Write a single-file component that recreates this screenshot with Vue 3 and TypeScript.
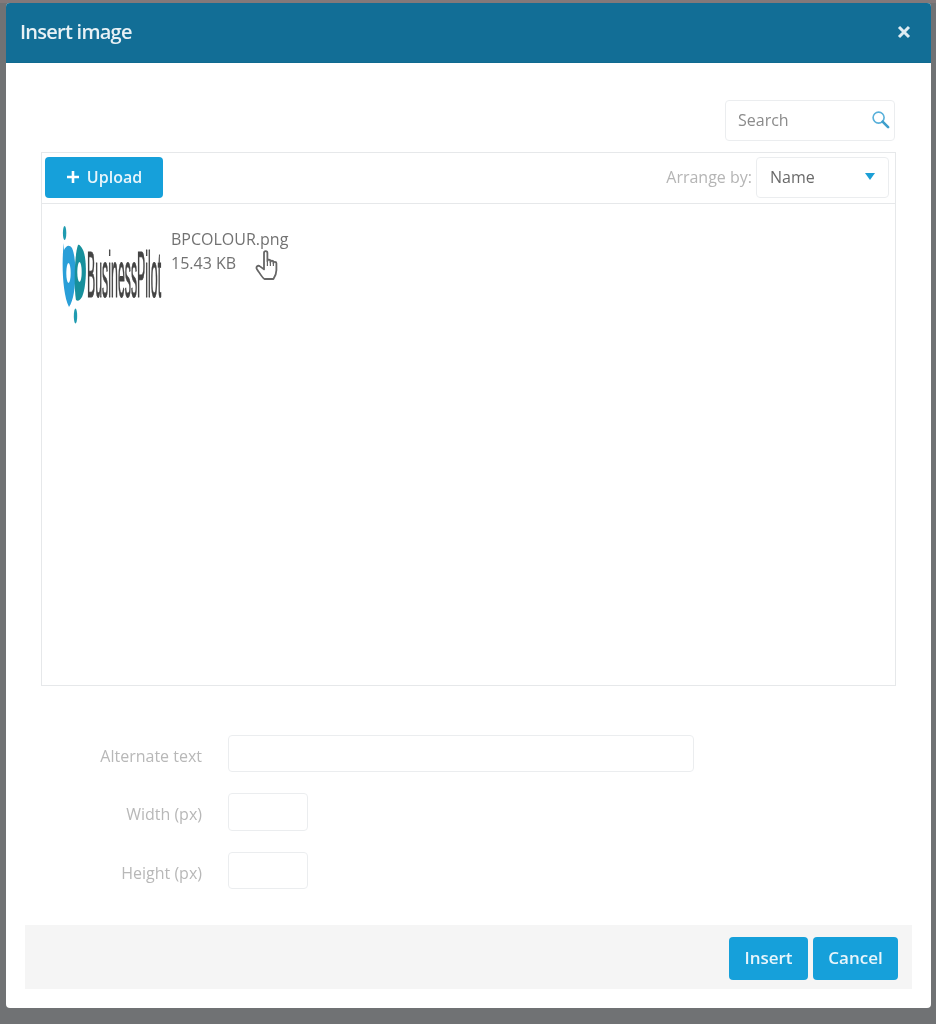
<script setup lang="ts">
const fields = [
  { label: 'Alternate text', cls: 'wide' },
  { label: 'Width (px)', cls: 'narrow tall' },
  { label: 'Height (px)', cls: 'narrow' },
]
</script>

<template>
  <div class="page">
    <div class="modal">
      <header class="head">
        <span class="title">Insert image</span>
        <svg class="close" width="14" height="14" viewBox="0 0 14 14" aria-label="Close">
          <path d="M2 2 12 12M12 2 2 12" stroke="#dfecf2" stroke-width="3" fill="none" />
        </svg>
      </header>

      <div class="search-row">
        <div class="search">
          <span>Search</span>
          <svg width="19" height="19" viewBox="0 0 20 20">
            <circle cx="8" cy="8" r="5.8" fill="none" stroke="#58b0da" stroke-width="1.7" />
            <path d="M12.2 12.2 18 18" stroke="#3f9fcc" stroke-width="2.8" stroke-linecap="round" />
          </svg>
        </div>
      </div>

      <section class="browser">
        <div class="toolbar">
          <button class="btn upload">
            <svg width="14" height="14" viewBox="0 0 14 14">
              <path d="M7 1v12M1 7h12" stroke="#fff" stroke-width="2.6" fill="none" />
            </svg>
            Upload
          </button>
          <div class="arrange">
            <span class="arrange-label">Arrange by:</span>
            <div class="select">
              <span>Name</span>
              <i class="caret"></i>
            </div>
          </div>
        </div>
        <div class="files">
          <div class="file">
            <svg class="logo" width="102" height="100" viewBox="0 0 102 100">
              <ellipse cx="3.6" cy="9" rx="1.7" ry="7" fill="#1f9bb0" />
              <path d="M3 19C0.5 34 1 70 8 83 16 72 16 34 11 24 8 20 5 22 3 26Z" fill="#2a9fd8" />
              <ellipse cx="7.5" cy="49" rx="2.2" ry="10" fill="#fff" />
              <path d="M17 21C13 32 13 66 15 76 17 78 19 76 21 73 26 62 26 34 22 26 20 22 18 20 17 21Z" fill="#17909c" />
              <ellipse cx="18.5" cy="48" rx="2.2" ry="10" fill="#fff" />
              <ellipse cx="14.5" cy="92" rx="1.7" ry="7.5" fill="#1f9bb0" />
              <text transform="translate(26 73) scale(0.193 1)" font-family="'Liberation Sans', sans-serif" font-size="64" fill="#444" stroke="#444" stroke-width="1">BusinessPilot</text>
            </svg>
            <div class="meta">
              <div>BPCOLOUR.png</div>
              <div class="size">15.43 KB</div>
            </div>
            <svg class="hand" width="24" height="31" viewBox="0 0 24 31">
              <path d="M9 3c0-2.400 3.400-2.400 3.400 0v8c0-1.800 3-1.800 3 0v1c0-1.700 3-1.700 3 0v1c0-1.600 3-1.600 3 .2v7c0 4-1.200 6-3 8.800H9.500c-2-1-3.500-3.800-7.500-9.800-1.500-2.400 1-4.500 3-2.800l4 3Z" fill="#fff" stroke="#666" stroke-width="1.800" stroke-linejoin="round" />
              <path d="M12.400 11v5M15.400 12v4M18.400 13v3" stroke="#666" stroke-width="1.200" fill="none" />
            </svg>
          </div>
        </div>
      </section>

      <div class="form">
        <div v-for="f in fields" :key="f.label" class="field" :class="f.cls">
          <label>{{ f.label }}</label>
          <div class="input"></div>
        </div>
      </div>

      <footer class="foot">
        <button class="btn insert">Insert</button>
        <button class="btn cancel">Cancel</button>
      </footer>
    </div>
  </div>
</template>

<style>
html, body { margin: 0; background: #6f7173; }
</style>

<style scoped>
.page {
  box-sizing: border-box;
  width: 936px;
  height: 1024px;
  padding: 0 0 0 6px;
  overflow: hidden;
  background: #707274;
  border-top: 3px solid #83797a;
  font-family: "Open Sans", "Liberation Sans", sans-serif;
  color: #666;
  filter: blur(0.6px);
}
.modal {
  box-sizing: border-box;
  width: 925px;
  height: 1005px;
  background: #fff;
  border-radius: 4px;
  overflow: hidden;
}
.head {
  box-sizing: border-box;
  height: 60px;
  padding: 0 20px 2px 14px;
  display: flex;
  align-items: center;
  justify-content: space-between;
  background: #126e96;
  border-bottom: 1px solid #0f6a90;
}
.title {
  color: #e8f1f5;
  font-size: 20px;
  font-weight: 600;
  letter-spacing: -0.75px;
}
.search-row {
  display: flex;
  justify-content: flex-end;
  padding: 37px 36px 0 0;
}
.search {
  box-sizing: border-box;
  width: 170px;
  height: 41px;
  padding: 0 4px 2px 12px;
  display: flex;
  align-items: center;
  justify-content: space-between;
  border: 1px solid #ebedef;
  border-radius: 4px;
  font-size: 16px;
  color: #8b8b8b;
}
.browser {
  box-sizing: border-box;
  width: 855px;
  height: 534px;
  margin: 11px 0 0 35px;
  border: 1px solid #e6e8ea;
}
.toolbar {
  box-sizing: border-box;
  height: 51px;
  padding: 4px 5px 5px 3px;
  display: flex;
  align-items: center;
  justify-content: space-between;
  border-bottom: 1px solid #e6e8ea;
}
.btn {
  box-sizing: border-box;
  border: 0;
  border-radius: 4px;
  background: #16a0da;
  color: #e8f5fb;
  font-family: inherit;
  font-size: 17px;
  font-weight: 600;
  display: flex;
  align-items: center;
  justify-content: center;
  padding: 0 0 2px;
}
.upload {
  width: 118px;
  height: 41px;
  gap: 7px;
  font-size: 16px;
}
.arrange {
  display: flex;
  align-items: center;
  gap: 4px;
  margin-right: 1px;
}
.arrange-label {
  font-size: 16px;
  color: #b5b5b5;
  padding-bottom: 2px;
}
.select {
  box-sizing: border-box;
  width: 133px;
  height: 41px;
  padding: 0 13px 2px 13px;
  display: flex;
  align-items: center;
  justify-content: space-between;
  border: 1px solid #ebedef;
  border-radius: 4px;
  font-size: 16px;
  color: #6a6a6a;
}
.caret {
  width: 0;
  height: 0;
  border-left: 5px solid transparent;
  border-right: 5px solid transparent;
  border-top: 7px solid #1c9fd6;
}
.file {
  position: relative;
  display: flex;
  padding: 20px 0 0 19px;
}
.logo {
  flex: none;
}
.meta {
  margin: 3px 0 0 8px;
  font-size: 16px;
  line-height: 24px;
  color: #727272;
}
.hand {
  position: absolute;
  left: 213px;
  top: 46px;
}
.form {
  padding-top: 49px;
}
.field {
  display: flex;
  align-items: center;
  gap: 26px;
  margin-bottom: 21px;
}
.field:last-child {
  margin-bottom: 0;
}
.field label {
  width: 196px;
  padding-top: 4px;
  text-align: right;
  font-size: 16px;
  color: #b8b8b8;
}
.input {
  box-sizing: border-box;
  height: 37px;
  border: 1px solid #ebedef;
  border-radius: 4px;
}
.wide .input {
  width: 466px;
}
.narrow .input {
  width: 80px;
}
.tall .input {
  height: 38px;
}
.foot {
  box-sizing: border-box;
  width: 887px;
  height: 64px;
  margin: 36px 0 0 19px;
  padding: 12px 14px 0 0;
  display: flex;
  justify-content: flex-end;
  align-items: flex-start;
  gap: 5px;
  background: #f5f5f5;
}
.insert {
  width: 79px;
  height: 43px;
}
.cancel {
  width: 85px;
  height: 43px;
}
</style>
